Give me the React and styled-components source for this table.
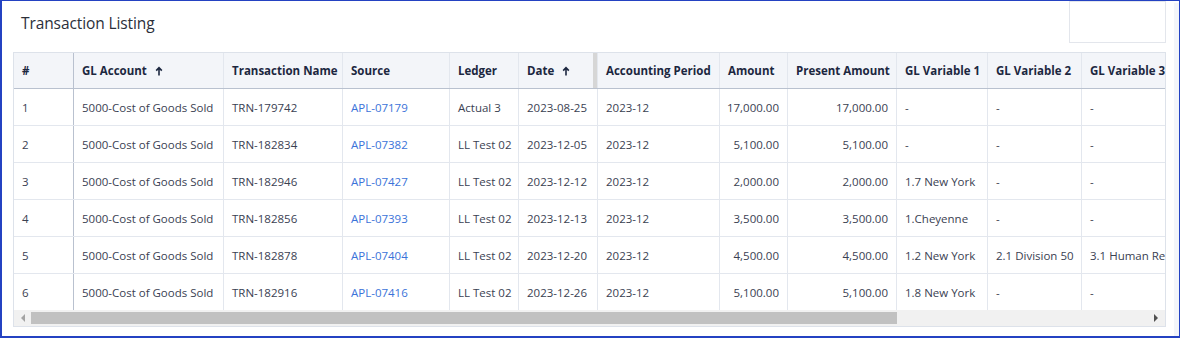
import React from 'react';
import styled, { createGlobalStyle, css } from 'styled-components';

const GlobalStyle = createGlobalStyle`
  html, body {
    margin: 0;
    padding: 0;
    background: #ffffff;
  }
  body {
    font-family: 'Open Sans', 'Noto Sans', sans-serif;
  }
`;

const COLUMNS = [
  { key: 'idx', label: '#', width: 60, pinned: true },
  { key: 'account', label: 'GL Account', width: 150, sorted: true },
  { key: 'name', label: 'Transaction Name', width: 119 },
  { key: 'source', label: 'Source', width: 107, link: true },
  { key: 'ledger', label: 'Ledger', width: 69 },
  { key: 'date', label: 'Date', width: 79, sorted: true, resizer: true },
  { key: 'period', label: 'Accounting Period', width: 122 },
  { key: 'amount', label: 'Amount', width: 68, numeric: true },
  { key: 'present', label: 'Present Amount', width: 109, numeric: true },
  { key: 'var1', label: 'GL Variable 1', width: 91 },
  { key: 'var2', label: 'GL Variable 2', width: 94 },
  { key: 'var3', label: 'GL Variable 3', width: 120 },
];

const rows = [
  { idx: '1', account: '5000-Cost of Goods Sold', name: 'TRN-179742', source: 'APL-07179', ledger: 'Actual 3', date: '2023-08-25', period: '2023-12', amount: '17,000.00', present: '17,000.00', var1: '-', var2: '-', var3: '-' },
  { idx: '2', account: '5000-Cost of Goods Sold', name: 'TRN-182834', source: 'APL-07382', ledger: 'LL Test 02', date: '2023-12-05', period: '2023-12', amount: '5,100.00', present: '5,100.00', var1: '-', var2: '-', var3: '-' },
  { idx: '3', account: '5000-Cost of Goods Sold', name: 'TRN-182946', source: 'APL-07427', ledger: 'LL Test 02', date: '2023-12-12', period: '2023-12', amount: '2,000.00', present: '2,000.00', var1: '1.7 New York', var2: '-', var3: '-' },
  { idx: '4', account: '5000-Cost of Goods Sold', name: 'TRN-182856', source: 'APL-07393', ledger: 'LL Test 02', date: '2023-12-13', period: '2023-12', amount: '3,500.00', present: '3,500.00', var1: '1.Cheyenne', var2: '-', var3: '-' },
  { idx: '5', account: '5000-Cost of Goods Sold', name: 'TRN-182878', source: 'APL-07404', ledger: 'LL Test 02', date: '2023-12-20', period: '2023-12', amount: '4,500.00', present: '4,500.00', var1: '1.2 New York', var2: '2.1 Division 50', var3: '3.1 Human Resources' },
  { idx: '6', account: '5000-Cost of Goods Sold', name: 'TRN-182916', source: 'APL-07416', ledger: 'LL Test 02', date: '2023-12-26', period: '2023-12', amount: '5,100.00', present: '5,100.00', var1: '1.8 New York', var2: '-', var3: '-' },
];

const gridTemplate = COLUMNS.map((c) => `${c.width}px`).join(' ');
const gridWidth = COLUMNS.reduce((sum, c) => sum + c.width, 0);

const Frame = styled.div`
  width: 1180px;
  height: 338px;
  box-sizing: border-box;
  border-style: solid;
  border-color: #2442c2;
  border-width: 1px 1px 2px 2px;
  display: flex;
  background: #ffffff;
  overflow: hidden;
`;

const Main = styled.div`
  flex: 1;
  min-width: 0;
  display: flex;
  flex-direction: column;
  padding: 0 8px 0 11px;
`;

const SideStrip = styled.div`
  width: 5px;
  margin-top: 2px;
  background: #f3f5fa;
`;

const TopBar = styled.div`
  height: 51px;
  display: flex;
  align-items: flex-start;
  justify-content: space-between;
`;

const Title = styled.h2`
  margin: 0;
  padding: 11px 0 0 8px;
  font-size: 15.5px;
  font-weight: 400;
  color: #2b2f3a;
  letter-spacing: -0.1px;
`;

const ToolBox = styled.div`
  width: 97px;
  height: 42px;
  box-sizing: border-box;
  border: 1px solid #e3e6ec;
`;

const TableCard = styled.div`
  border: 1px solid #dde2ea;
  overflow: hidden;
`;

const Viewport = styled.div`
  overflow: hidden;
`;

const Row = styled.div`
  display: grid;
  grid-template-columns: ${gridTemplate};
  width: ${gridWidth}px;
  height: ${({ $head }) => ($head ? '36px' : '37px')};
  box-sizing: border-box;
  border-bottom: 1px solid ${({ $head }) => ($head ? '#b9c1cf' : '#e3e7ee')};
  background: ${({ $head }) => ($head ? '#f3f5f9' : '#ffffff')};

  &:last-child {
    border-bottom: none;
    height: 36px;
  }
`;

const Cell = styled.div`
  position: relative;
  display: flex;
  align-items: center;
  justify-content: ${({ $numeric }) => ($numeric ? 'flex-end' : 'flex-start')};
  box-sizing: border-box;
  padding: 0 8px;
  border-right: 1px solid ${({ $pinned }) => ($pinned ? '#b9c1cf' : '#e3e7ee')};
  white-space: nowrap;
  overflow: hidden;
  font-size: 11.5px;
  color: #3a4152;
`;

const HeadCell = styled(Cell)`
  font-weight: 700;
  color: #1c2740;
  gap: 8px;
  overflow: visible;

  ${({ $resizer }) =>
    $resizer &&
    css`
      &::after {
        content: '';
        position: absolute;
        top: 0;
        bottom: 0;
        right: 0;
        width: 4px;
        background: #d6d6d6;
      }
    `}
`;

const LinkText = styled.span`
  color: #3b73d9;
  cursor: pointer;
`;

const SortArrow = () => (
  <svg width="8" height="10" viewBox="0 0 8 10" fill="none">
    <path d="M4 9.5V1.8M1.2 4.6L4 1.6 6.8 4.6" stroke="#1c2740" strokeWidth="1.6" />
  </svg>
);

const ScrollTrack = styled.div`
  display: flex;
  align-items: center;
  height: 16px;
  background: #f1f1f1;
`;

const ScrollButton = styled.div`
  width: 17px;
  height: 16px;
  display: flex;
  align-items: center;
  justify-content: center;
  flex-shrink: 0;
`;

const ScrollThumb = styled.div`
  width: 866px;
  height: 12px;
  background: #c1c1c1;
`;

const ScrollSpacer = styled.div`
  flex: 1;
`;

const Triangle = ({ dir, color }) => (
  <svg width="5" height="8" viewBox="0 0 5 8">
    {dir === 'left' ? (
      <path d="M5 0V8L1 4Z" fill={color} />
    ) : (
      <path d="M0 0V8L4 4Z" fill={color} />
    )}
  </svg>
);

export default function App() {
  return (
    <>
      <GlobalStyle />
      <Frame>
        <Main>
          <TopBar>
            <Title>Transaction Listing</Title>
            <ToolBox />
          </TopBar>
          <TableCard>
            <Viewport>
              <Row $head>
                {COLUMNS.map((col) => (
                  <HeadCell key={col.key} $pinned={col.pinned} $resizer={col.resizer}>
                    <span>{col.label}</span>
                    {col.sorted && <SortArrow />}
                  </HeadCell>
                ))}
              </Row>
              {rows.map((row) => (
                <Row key={row.idx}>
                  {COLUMNS.map((col) => (
                    <Cell key={col.key} $pinned={col.pinned} $numeric={col.numeric}>
                      {col.link ? <LinkText>{row[col.key]}</LinkText> : row[col.key]}
                    </Cell>
                  ))}
                </Row>
              ))}
            </Viewport>
            <ScrollTrack>
              <ScrollButton>
                <Triangle dir="left" color="#a3a3a3" />
              </ScrollButton>
              <ScrollThumb />
              <ScrollSpacer />
              <ScrollButton>
                <Triangle dir="right" color="#505050" />
              </ScrollButton>
            </ScrollTrack>
          </TableCard>
        </Main>
        <SideStrip />
      </Frame>
    </>
  );
}
